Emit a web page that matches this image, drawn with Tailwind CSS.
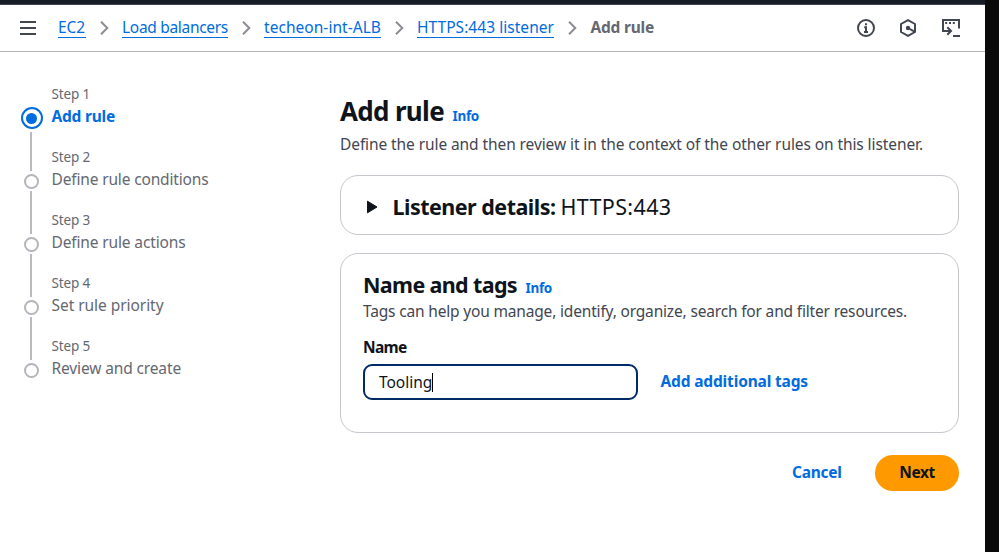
<!DOCTYPE html>
<html lang="en">
<head>
<meta charset="utf-8">
<title>Add rule</title>
<script src="https://cdn.jsdelivr.net/npm/@tailwindcss/browser@4"></script>
</head>
<body class="flex h-[552px] w-[999px] overflow-hidden bg-[#0a0a0a] font-['Noto_Sans',sans-serif] text-[15.5px] leading-5 text-[#0f141a]">
<div class="flex h-full w-[985px] flex-col bg-white">
  <div class="h-[5px] w-full shrink-0 border-b border-[#424650] bg-[#161d26]"></div>

  <header class="flex h-[47px] shrink-0 items-center justify-between border-b border-[#b4b4bb] pr-[25px] pl-5">
    <div class="flex items-center">
      <svg class="mr-[22px] h-4 w-4 shrink-0" viewBox="0 0 16 16" stroke="#424650" stroke-width="2"><path d="M0 2h16M0 8h16M0 14h16"/></svg>
      <nav class="flex items-center whitespace-nowrap text-[#006ce0]">
        <a class="h-[20px] w-7 border-b border-[#006ce0] leading-[18px] tracking-[-0.09px]">EC2</a>
        <svg class="mx-[13.5px] h-[14px] w-[9px]" viewBox="0 0 9 14" fill="none" stroke="#8c8c94" stroke-width="2"><path d="M1 .7 7.3 7 1 13.3"/></svg>
        <a class="h-[20px] w-[106px] border-b border-[#006ce0] leading-[18px] tracking-[-0.306px]">Load balancers</a>
        <svg class="mx-[13.5px] h-[14px] w-[9px]" viewBox="0 0 9 14" fill="none" stroke="#8c8c94" stroke-width="2"><path d="M1 .7 7.3 7 1 13.3"/></svg>
        <a class="h-[20px] w-[117px] border-b border-[#006ce0] leading-[18px] tracking-[0.045px]">techeon-int-ALB</a>
        <svg class="mx-[13.5px] h-[14px] w-[9px]" viewBox="0 0 9 14" fill="none" stroke="#8c8c94" stroke-width="2"><path d="M1 .7 7.3 7 1 13.3"/></svg>
        <a class="h-[20px] w-[137px] border-b border-[#006ce0] leading-[18px] tracking-[0.045px]">HTTPS:443 listener</a>
        <svg class="mr-[14px] ml-[13.5px] h-[14px] w-[9px]" viewBox="0 0 9 14" fill="none" stroke="#8c8c94" stroke-width="2"><path d="M1 .7 7.3 7 1 13.3"/></svg>
        <span class="h-[20px] leading-[18px] font-bold tracking-[-0.217px] text-[#656871]">Add rule</span>
      </nav>
    </div>
    <div class="flex items-center text-[#424650]">
      <svg class="mr-6 h-[18px] w-[18px]" viewBox="0 0 18 18" fill="none" stroke="currentColor" stroke-width="2"><circle cx="9" cy="9" r="8"/><path d="M9 4.3v2M7.2 8.2H9V13M7 13h4"/></svg>
      <svg class="mr-[25px] h-[18px] w-[18px]" viewBox="0 0 18 18" fill="none" stroke="currentColor" stroke-width="2"><path d="M9 1.1 16 5v8l-7 3.9L2 13V5z" stroke-linejoin="round"/><circle cx="9" cy="9" r="2.2" fill="currentColor" stroke="none"/><path d="M9 9l6.5 3.7"/></svg>
      <svg class="h-[18px] w-[18px]" viewBox="0 0 18 18" fill="none" stroke="currentColor" stroke-width="2"><path d="M9 12H1V1h16v8.5"/><path d="M3.2 4h2M7 4h2M10.8 4h2"/><path d="M5.3 8.3 9 12l-3.7 3.7M11 17h7"/></svg>
    </div>
  </header>

  <div class="flex grow">
    <ol class="w-[340px] shrink-0 pt-8 pl-[20.5px] whitespace-nowrap text-[#656871]">
      <li class="flex h-[63px] gap-[9px]">
        <div class="flex w-[22px] flex-col items-center pt-[23px]">
          <div class="flex h-[22px] w-[22px] shrink-0 items-center justify-center rounded-full border-2 border-[#006ce0]"><div class="h-[11px] w-[11px] rounded-full bg-[#006ce0]"></div></div>
          <div class="mt-[3px] mr-px w-[2px] grow bg-[#b9b9c0]"></div>
        </div>
        <div><p class="text-[13.5px] tracking-[-0.156px]">Step 1</p><p class="mt-[2px] font-bold tracking-[-0.217px] text-[#006ce0]">Add rule</p></div>
      </li>
      <li class="flex h-[63px] gap-[9px]">
        <div class="flex w-[22px] flex-col items-center">
          <div class="mr-px h-6 w-[2px] bg-[#b9b9c0]"></div>
          <div class="my-[2.5px] h-[15px] w-[15px] shrink-0 rounded-full border-2 border-[#b4b4bb]"></div>
          <div class="mr-px w-[2px] grow bg-[#b9b9c0]"></div>
        </div>
        <div><p class="text-[13.5px] tracking-[-0.156px]">Step 2</p><p class="mt-[2px] tracking-[-0.155px]">Define rule conditions</p></div>
      </li>
      <li class="flex h-[63px] gap-[9px]">
        <div class="flex w-[22px] flex-col items-center">
          <div class="mr-px h-6 w-[2px] bg-[#b9b9c0]"></div>
          <div class="my-[2.5px] h-[15px] w-[15px] shrink-0 rounded-full border-2 border-[#b4b4bb]"></div>
          <div class="mr-px w-[2px] grow bg-[#b9b9c0]"></div>
        </div>
        <div><p class="text-[13.5px] tracking-[-0.156px]">Step 3</p><p class="mt-[2px] tracking-[-0.137px]">Define rule actions</p></div>
      </li>
      <li class="flex h-[63px] gap-[9px]">
        <div class="flex w-[22px] flex-col items-center">
          <div class="mr-px h-6 w-[2px] bg-[#b9b9c0]"></div>
          <div class="my-[2.5px] h-[15px] w-[15px] shrink-0 rounded-full border-2 border-[#b4b4bb]"></div>
          <div class="mr-px w-[2px] grow bg-[#b9b9c0]"></div>
        </div>
        <div><p class="text-[13.5px] tracking-[-0.156px]">Step 4</p><p class="mt-[2px] tracking-[-0.05px]">Set rule priority</p></div>
      </li>
      <li class="flex h-[63px] gap-[9px]">
        <div class="flex w-[22px] flex-col items-center">
          <div class="mr-px h-6 w-[2px] bg-[#b9b9c0]"></div>
          <div class="my-[2.5px] h-[15px] w-[15px] shrink-0 rounded-full border-2 border-[#b4b4bb]"></div>
        </div>
        <div><p class="text-[13.5px] tracking-[-0.156px]">Step 5</p><p class="mt-[2px] tracking-[-0.132px]">Review and create</p></div>
      </li>
    </ol>

    <main class="w-[619px] pt-[41px] whitespace-nowrap">
      <div class="flex items-baseline gap-[8.5px]">
        <h1 class="text-[26px] leading-9 font-bold tracking-[-0.678px]">Add rule</h1>
        <a class="text-[13.5px] font-bold tracking-[-0.301px] text-[#006ce0]">Info</a>
      </div>
      <p class="mt-[5px] tracking-[-0.089px] text-[#424650]">Define the rule and then review it in the context of the other rules on this listener.</p>

      <section class="mt-[21px] flex h-[60px] items-center rounded-[18px] border border-[#c6c6cd] pt-[4px] pl-[25px]">
        <svg class="mr-[14.5px] h-[14px] w-3" viewBox="0 0 12 14" fill="#0f141a" stroke="#0f141a" stroke-linejoin="round"><path d="M1.5 1.2v11.6L11 7z"/></svg>
        <h2 class="text-[21.5px] leading-7"><span class="mr-[5px] font-bold tracking-[-0.514px]">Listener details:</span><span class="tracking-[0.361px]">HTTPS:443</span></h2>
      </section>

      <section class="mt-[18px] h-[180px] rounded-[18px] border border-[#c6c6cd] px-[22px] pt-[17px]">
        <div class="flex items-baseline gap-[8.5px]">
          <h2 class="text-[21.5px] leading-7 font-bold tracking-[-0.644px]">Name and tags</h2>
          <a class="text-[13.5px] font-bold tracking-[-0.301px] text-[#006ce0]">Info</a>
        </div>
        <p class="mt-[2px] tracking-[-0.174px] text-[#424650]">Tags can help you manage, identify, organize, search for and filter resources.</p>
        <p class="mt-4 font-bold tracking-[-0.691px]">Name</p>
        <div class="mt-[7px] flex items-center gap-[22.5px]">
          <div class="flex h-9 w-[275px] items-center rounded-[9px] border-2 border-[#002b66] pl-[14px]"><span class="tracking-[-0.03px]">Tooling</span><span class="h-[19px] w-px bg-black"></span></div>
          <a class="pb-[2px] font-bold tracking-[-0.159px] text-[#006ce0]">Add additional tags</a>
        </div>
      </section>

      <div class="mt-[22px] flex items-center justify-end gap-[33.5px] font-bold">
        <a class="pb-[2px] tracking-[-0.281px] text-[#006ce0]">Cancel</a>
        <button class="h-9 w-[84px] rounded-full bg-[#ff9900] pb-[2px] tracking-[-0.434px]">Next</button>
      </div>
    </main>
  </div>
</div>
</body>
</html>
